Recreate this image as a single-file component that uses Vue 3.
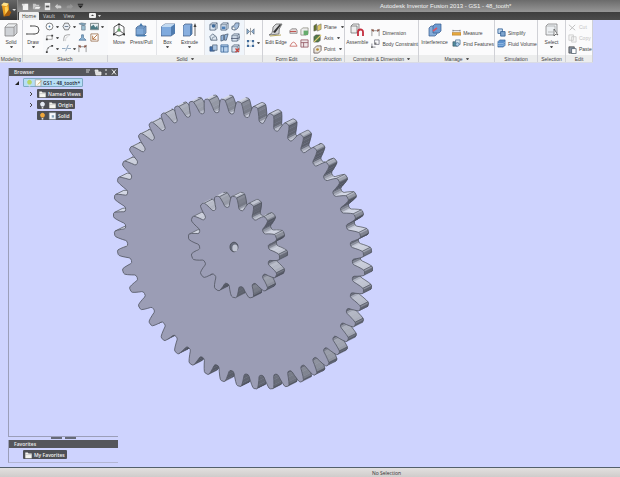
<script setup>
const panels = [
  { name: 'Modeling', cls: 'w-modeling', groups: [{ big: [{ icon: 'solid', label: 'Solid', caret: true }] }] },
  {
    name: 'Sketch', cls: 'w-sketch', groups: [
      { big: [{ icon: 'draw', label: 'Draw', caret: true }] },
      { grid: 'g-sketch', icons: ['circle', 'polygon', 'project', 'image', 'rect', 'fillet', 'mirror', 'editsk', 'arc', 'trim', 'dim', ''], carets: [0, 1, 3, 4, 8, 9] },
    ],
  },
  {
    name: 'Solid', cls: 'w-solid', more: true, groups: [
      { big: [{ icon: 'move', label: 'Move' }, { icon: 'press', label: 'Press/Pull' }] },
      { big: [{ icon: 'box', label: 'Box', caret: true }, { icon: 'extrude', label: 'Extrude', caret: true }], line: true },
      { grid: 'g-solid', line: true, icons: ['hole', 'shell', 'sweep', 'cut', 'loft', 'split', 'combine', 'frame', 'del'], carets: [] },
      { grid: 'g-one', line: true, icons: ['sym', 'pattern'], carets: [1] },
    ],
  },
  {
    name: 'Form Edit', cls: 'w-form', groups: [
      { big: [{ icon: 'edge', label: 'Edit Edge' }] },
      { grid: 'g-two', icons: ['fa', 'fb', 'fc', 'fd'], carets: [] },
    ],
  },
  { name: 'Construction', cls: 'w-constr', groups: [{ rows: [['plane', 'Plane'], ['axis', 'Axis'], ['point', 'Point']], drop: true }] },
  {
    name: 'Constrain & Dimension', cls: 'w-dim', more: true, groups: [
      { big: [{ icon: 'assemble', label: 'Assemble' }] },
      { rows: [['dim', 'Dimension'], ['body', 'Body Constraint']] },
    ],
  },
  {
    name: 'Manage', cls: 'w-manage', more: true, groups: [
      { big: [{ icon: 'interf', label: 'Interference' }] },
      { rows: [['measure', 'Measure'], ['find', 'Find Features']] },
    ],
  },
  { name: 'Simulation', cls: 'w-sim', groups: [{ rows: [['simplify', 'Simplify'], ['fluid', 'Fluid Volume']] }] },
  { name: 'Selection', cls: 'w-sel', groups: [{ big: [{ icon: 'select', label: 'Select', caret: true }] }] },
  { name: 'Edit', cls: 'w-edit', groups: [{ rows: [['x', 'Cut', true], ['copy', 'Copy', true], ['paste', 'Paste']] }] },
]
const quick = ['new', 'open', 'save', 'undo', 'redo', 'menu']

const DEPTH = [8, -4]

/* Tooth profile as [angle fraction of the pitch, height 0..1] */
const PROFILE = [
  [-0.5, 0], [-0.39, 0.03], [-0.33, 0.14], [-0.28, 0.4], [-0.21, 0.72], [-0.15, 0.93], [-0.08, 1],
  [0.08, 1], [0.15, 0.93], [0.21, 0.72], [0.28, 0.4], [0.33, 0.14], [0.39, 0.03],
]

function makeGear(cx, cy, rx, ry, teeth, root) {
  const skew = 0.2
  const pitch = (Math.PI * 2) / teeth
  const pts = []
  for (let i = 0; i < teeth; i++) {
    for (const [f, h] of PROFILE) {
      const t = Math.PI + (i + f) * pitch
      const r = root + (1 - root) * h
      pts.push([
        cx + rx * r * Math.cos(t),
        cy + ry * r * (skew * Math.cos(t) + 0.98 * Math.sin(t)),
      ])
    }
  }
  const faces = []
  pts.forEach((a, i) => {
    const b = pts[(i + 1) % pts.length]
    const nx = b[1] - a[1]
    const ny = a[0] - b[0]
    if (nx * DEPTH[0] + ny * DEPTH[1] <= 0) return
    const len = Math.hypot(nx, ny) || 1
    const up = -ny / len
    const light = Math.round(up > 0 ? 104 + 108 * up : 104 + 36 * up)
    const a2 = [a[0] + DEPTH[0], a[1] + DEPTH[1]]
    const b2 = [b[0] + DEPTH[0], b[1] + DEPTH[1]]
    const k = i % PROFILE.length
    faces.push({
      d: path([a, b, b2, a2]) + 'Z',
      fill: `rgb(${light},${light + 4},${light + 16})`,
      edge: path([a2, b2]) + (k === 5 || k === 8 ? path([a, a2]) : ''),
    })
  })
  return { faces, front: path(pts) + 'Z' }
}
function path(list) {
  return 'M' + list.map((p) => p[0].toFixed(2) + ' ' + p[1].toFixed(2)).join('L')
}
const gears = [
  makeGear(239, 181, 125.5, 145, 48, 0.905),
  makeGear(234, 184, 45.5, 51.5, 16, 0.77),
]
</script>

<template>
  <svg class="defs" aria-hidden="true">
    <defs>
      <symbol id="solid" viewBox="0 0 14 14"><path d="M1 4 4 1H13V10L10 13H1Z" fill="#cfd2d6" stroke="#777" stroke-width=".7" /><path d="M1 4H10V13M10 4 13 1" fill="none" stroke="#888" stroke-width=".7" /><path d="M1 4 4 1H13L10 4Z" fill="#eceef0" stroke="#888" stroke-width=".5" /></symbol>
      <symbol id="draw" viewBox="0 0 14 14"><path d="M1 11H9A4 4 0 0 0 9 3H6" fill="none" stroke="#555" /><path d="M0 10h2v2H0zM7 10h2v2H7zM4 2h2v2H4z" fill="#999" /></symbol>
      <symbol id="circle" viewBox="0 0 10 10"><circle cx="5" cy="5" r="3.8" fill="#fff" stroke="#555" stroke-width=".8" /><circle cx="5" cy="5" r="1" fill="#4b7ba8" /></symbol>
      <symbol id="polygon" viewBox="0 0 10 10"><path d="M3 1.300H7L9 5 7 8.700H3L1 5Z" fill="#e8ecf2" stroke="#555" stroke-width=".8" /><path d="M3 5H7" stroke="#678" /></symbol>
      <symbol id="project" viewBox="0 0 10 10"><path d="M1 2 4 1 9 2 6 4Z" fill="#7ea5bd" stroke="#456" stroke-width=".5" /><path d="M4 4H8V9H4Z" fill="#9fc1d3" stroke="#567" stroke-width=".6" /></symbol>
      <symbol id="image" viewBox="0 0 10 10"><path d="M.5 1.500h9v7h-9z" fill="#e6edf0" stroke="#566" stroke-width=".8" /><path d="M1 8V5L4 3 6 6 8 4 9 8Z" fill="#4b7a83" /></symbol>
      <symbol id="rect" viewBox="0 0 10 10"><path d="M2 3H8V7H2Z" fill="#fff" stroke="#777" stroke-width=".7" /><path d="M1 6h2v2H1zM7 2h2v2H7z" fill="#444" /></symbol>
      <symbol id="fillet" viewBox="0 0 10 10"><path d="M2 9V6Q2 2 6 2H9" fill="none" stroke="#888" stroke-width=".8" /><path d="M4 9V7Q4 4 7 4" fill="none" stroke="#bbb" stroke-width=".6" /></symbol>
      <symbol id="mirror" viewBox="0 0 10 10"><path d="M4 5V2H6V5L9 8H1Z" fill="#8fb5d5" stroke="#3c658a" stroke-width=".7" /></symbol>
      <symbol id="editsk" viewBox="0 0 10 10"><path d="M1 1H9V9H1Z" fill="#fff" stroke="#8a5c38" stroke-width=".8" /><path d="M3 7 8 2M3 3V7H7" stroke="#b1713d" stroke-width="1" fill="none" /></symbol>
      <symbol id="arc" viewBox="0 0 10 10"><path d="M2 9Q2 3 8 2" fill="none" stroke="#666" stroke-width=".8" /><path d="M1 8h2v2H1zM7 1h2v2H7zM3 4h1v1H3z" fill="#444" /></symbol>
      <symbol id="trim" viewBox="0 0 10 10"><path d="M0 5H4M6 5H10M4 8 7 1" stroke="#6d8cab" stroke-width=".8" fill="none" /></symbol>
      <symbol id="dim" viewBox="0 0 10 10"><path d="M1 9V1M9 9V1M1 3H9" stroke="#666" stroke-width=".7" fill="none" /><path d="M0 2 3 1.500V4.500ZM10 2 7 1.500V4.500Z" fill="#8a4d3c" /></symbol>
      <symbol id="move" viewBox="0 0 14 14"><path d="M7 1V7L2 11M7 7 12 11M7 1 2 4V11L7 13 12 11V4Z" fill="none" stroke="#333" stroke-width=".8" /><path d="M7 5 9 7 7 9 5 7Z" fill="#5e9c63" /><path d="M5.500 2 7 0 8.500 2ZM1 10 1 12.500 3.500 12ZM13 10V12.500L10.500 12Z" fill="#333" /></symbol>
      <symbol id="press" viewBox="0 0 14 14"><path d="M2 5 4 3H12V10L10 12H2Z" fill="#7fa9d8" stroke="#42638c" stroke-width=".7" /><path d="M7 0 9 3H5ZM1 12 13 12 11 13.500H3Z" fill="#477aad" /><path d="M2 5H10V12M10 5 12 3" fill="none" stroke="#42638c" stroke-width=".5" /></symbol>
      <symbol id="box" viewBox="0 0 14 14"><path d="M0 4 4 1H14V10L10 13H0Z" fill="#7faade" stroke="#39557b" stroke-width=".7" /><path d="M0 4 4 1H14L10 4Z" fill="#c2d9f0" /><path d="M10 4 14 1V10L10 13Z" fill="#507caf" /></symbol>
      <symbol id="extrude" viewBox="0 0 14 14"><path d="M0 3 2 1H9V11L7 13H0Z" fill="#89afdf" stroke="#39557b" stroke-width=".7" /><path d="M7 3 9 1V11L7 13Z" fill="#507caf" /><path d="M12 13V3" stroke="#444" stroke-width=".8" /><path d="M10.500 4 12 0 13.500 4Z" fill="#444" /></symbol>
      <symbol id="cubelet" viewBox="0 0 10 10"><path d="M1 3 3 1H9V7L7 9H1Z" fill="#d9e4f0" stroke="#46586e" stroke-width=".8" /><path d="M1 3H7V9M7 3 9 1" fill="none" stroke="#46586e" stroke-width=".6" /></symbol>
      <symbol id="hole" viewBox="0 0 10 10"><use href="#cubelet" /><circle cx="5" cy="4.500" r="2" fill="#3f6b9b" /></symbol>
      <symbol id="shell" viewBox="0 0 10 10"><use href="#cubelet" /><path d="M2 5H6V8H2Z" fill="#4c7fb8" /></symbol>
      <symbol id="sweep" viewBox="0 0 10 10"><path d="M1 8V5Q4 5 5 1H9Q9 8 4 9Z" fill="#a4bddb" stroke="#46586e" stroke-width=".8" /><circle cx="3" cy="7" r="1.500" fill="#fff" stroke="#456" stroke-width=".5" /></symbol>
      <symbol id="cut" viewBox="0 0 10 10"><path d="M1 4 4 1 8 4 9 8H2Z" fill="#dce6f0" stroke="#46586e" stroke-width=".8" /><path d="M3 8Q3 4 7 4" fill="none" stroke="#46586e" stroke-width=".6" /></symbol>
      <symbol id="loft" viewBox="0 0 10 10"><path d="M1 3 4 2 4 8 1 9ZM5 2 9 1 7 8 5 8Z" fill="#93b4da" stroke="#46586e" stroke-width=".8" /></symbol>
      <symbol id="split" viewBox="0 0 10 10"><use href="#cubelet" /><path d="M0 6 8 6 10 4" fill="none" stroke="#4a5870" /></symbol>
      <symbol id="combine" viewBox="0 0 10 10"><path d="M1 3H6V8H1Z" fill="#3f6fae" stroke="#334f78" stroke-width=".7" /><path d="M4 1H9V7H4Z" fill="#a9c4e2" stroke="#46586e" stroke-width=".7" /></symbol>
      <symbol id="frame" viewBox="0 0 10 10"><path d="M1 1H9V9H1Z" fill="#b9d2ec" stroke="#3e6b9d" stroke-width=".9" /><path d="M1 3H9M4 3V9" stroke="#3e6b9d" stroke-width=".9" /></symbol>
      <symbol id="del" viewBox="0 0 10 10"><use href="#cubelet" /><path d="M5 5 9 9M9 5 5 9" stroke="#cc4037" stroke-width="1.400" /></symbol>
      <symbol id="sym" viewBox="0 0 10 10"><path d="M5 1V9" stroke="#555" stroke-width=".6" /><path d="M1 2 4 5 1 8ZM9 2 6 5 9 8Z" fill="#8fb1d4" stroke="#456" stroke-width=".6" /></symbol>
      <symbol id="pattern" viewBox="0 0 10 10"><path d="M1 1h2.500v2.500H1zM6.500 1H9v2.500H6.500zM1 6.500h2.500V9H1zM6.500 6.500H9V9H6.500z" fill="#416b9b" /><path d="M4 2H6M4 8H6M2 4V6M8 4V6" stroke="#8ab" stroke-width=".7" /></symbol>
      <symbol id="edge" viewBox="0 0 14 14"><path d="M0 12Q4 11 4 4L7 1H13Q9 6 10 11Z" fill="#d5d6d8" stroke="#555" stroke-width=".7" /><path d="M4 9 11 1 12 2 6 10Z" fill="#333" /><path d="M1 13 12 12" stroke="#b4a65a" /></symbol>
      <symbol id="fa" viewBox="0 0 10 10"><path d="M1 7V4L3 2H8L9 4V7Z" fill="#e4dada" stroke="#666" stroke-width=".7" /><path d="M1 5H8" stroke="#bd4b46" /></symbol>
      <symbol id="fb" viewBox="0 0 10 10"><path d="M1 3 3 1H9V7L7 9H1Z" fill="#eee" stroke="#776" stroke-width=".7" /><path d="M4 4H9V9H4Z" fill="#66ac6d" /></symbol>
      <symbol id="fc" viewBox="0 0 10 10"><path d="M1 8Q5-1 9 8M1 8H9" fill="none" stroke="#c6645e" stroke-width=".9" /></symbol>
      <symbol id="fd" viewBox="0 0 10 10"><path d="M1 1H9V9H1ZM1 4H9M4 4V9" fill="#eee5e8" stroke="#915560" stroke-width=".9" /></symbol>
      <symbol id="plane" viewBox="0 0 10 10"><path d="M1 3 4 1V8L1 9Z" fill="#66752c" stroke="#444" stroke-width=".5" /><path d="M5 3 9 1V7L5 9Z" fill="#dfc868" stroke="#665" stroke-width=".6" /></symbol>
      <symbol id="axis" viewBox="0 0 10 10"><path d="M1 3 3 1H8V7L6 9H1Z" fill="#52794a" stroke="#444" stroke-width=".6" /><path d="M1 9 9 1" stroke="#e3cf72" stroke-width="1.400" /></symbol>
      <symbol id="point" viewBox="0 0 10 10"><path d="M1 4 4 1H9V6L6 9H1Z" fill="#e9e5dd" stroke="#544" stroke-width=".8" /><circle cx="5" cy="5" r="1.500" fill="#b68b36" /></symbol>
      <symbol id="assemble" viewBox="0 0 14 14"><path d="M1 3 3 1H9V8L7 10H1ZM1 3H7V10" fill="#eee" stroke="#666" stroke-width=".7" /><path d="M8 13V9A2.500 2.500 0 0 1 13 9V13" fill="none" stroke="#c32d3d" stroke-width="1.800" /></symbol>
      <symbol id="body" viewBox="0 0 10 10"><path d="M4 1H9V6H4ZM1 5V9H5" fill="none" stroke="#667" stroke-width=".8" /><path d="M0 8h2v2H0zM4 4h2v2H4z" fill="#777" /></symbol>
      <symbol id="interf" viewBox="0 0 14 14"><path d="M1 5 3 3H9V11L7 13H1Z" fill="#86add9" stroke="#35598d" stroke-width=".7" /><path d="M5 3 7 1H13V8L11 10H5Z" fill="#6d9bd2" stroke="#35598d" stroke-width=".7" /><path d="M5 8 9 5" stroke="#d5566a" stroke-width="1.600" /></symbol>
      <symbol id="measure" viewBox="0 0 10 10"><path d="M0 5H10V8H0Z" fill="#e5a83d" stroke="#a66c1e" stroke-width=".5" /><path d="M1 3H9M1 2V4M9 2V4" stroke="#555" stroke-width=".7" /></symbol>
      <symbol id="find" viewBox="0 0 10 10"><path d="M1 3H6V8H1Z" fill="#508c9c" stroke="#345" stroke-width=".6" /><path d="M4 1H9V6H4Z" fill="#d8e7ef" stroke="#346087" stroke-width=".7" /><circle cx="6" cy="6" r="2" fill="#aed0ea" stroke="#346087" stroke-width=".7" /></symbol>
      <symbol id="simplify" viewBox="0 0 10 10"><path d="M1 1H6V6H1Z" fill="#c4d9ef" stroke="#315f95" stroke-width=".9" /><path d="M4 4H9V9H4Z" fill="#7ea5cf" stroke="#315f95" stroke-width=".9" /></symbol>
      <symbol id="fluid" viewBox="0 0 10 10"><path d="M1 3 3 1H9V7L7 9H1Z" fill="#5c91cd" stroke="#2d5689" stroke-width=".6" /><path d="M1 5H7L9 3M1 7H7L9 5" fill="none" stroke="#b8d4f0" stroke-width=".6" /></symbol>
      <symbol id="select" viewBox="0 0 14 14"><path d="M1 3 3 1H12V10L10 12H1Z" fill="#eceff2" stroke="#777" stroke-width=".7" /><path d="M1 3H10V12M3 9H8" fill="none" stroke="#999" stroke-width=".6" /><path d="M9 6V13L11 11 13 12Z" fill="#fff" stroke="#333" stroke-width=".6" /></symbol>
      <symbol id="x" viewBox="0 0 10 10"><path d="M1 2 8 8M8 2 2 8" stroke="#bbb" /></symbol>
      <symbol id="copy" viewBox="0 0 10 10"><path d="M1 1H6V7H1ZM4 3H9V9H4Z" fill="#f6f6f6" stroke="#c4c4c4" stroke-width=".8" /></symbol>
      <symbol id="paste" viewBox="0 0 10 10"><path d="M1 2H7V9H1Z" fill="#8a94a2" stroke="#444" stroke-width=".8" /><path d="M4 4H9V9.500H4Z" fill="#fff" stroke="#456" stroke-width=".8" /></symbol>
      <symbol id="new" viewBox="0 0 10 10"><path d="M2 9V4L4 2H8V9Z" fill="#f2f2f2" /><path d="M1 2h3v2H1z" fill="#ddd" /></symbol>
      <symbol id="open" viewBox="0 0 10 10"><path d="M1 2H4L5 3H8V5L9 8H1Z" fill="#c6c6c6" /><path d="M2 8 4 5H10L8 8Z" fill="#f1f1f1" stroke="#666" stroke-width=".4" /></symbol>
      <symbol id="save" viewBox="0 0 10 10"><path d="M2 1H8V9H2Z" fill="#e9e9e9" /><path d="M3 4H7V6H3Z" fill="#555" /></symbol>
      <symbol id="undo" viewBox="0 0 10 10"><path d="M1 5 4 2V4H7Q9 5 8 7H4V8Z" fill="#ccc" /></symbol>
      <symbol id="redo" viewBox="0 0 10 10"><path d="M9 5 6 2V4H3Q1 5 2 7H6V8Z" fill="#969696" /></symbol>
      <symbol id="menu" viewBox="0 0 10 10"><path d="M2 4H8L5 7ZM2 2H8V3H2Z" fill="#222" /></symbol>
      <symbol id="folder" viewBox="0 0 10 10"><path d="M1 2H4L5 3H9V9H1Z" fill="#f5f5ef" /><path d="M1 4.500H9" stroke="#999" stroke-width=".5" /></symbol>
      <symbol id="bulb" viewBox="0 0 10 10"><path d="M3.500 7Q1.500 5 2.200 3A3 3 0 0 1 7.800 3Q8.500 5 6.500 7Z" fill="currentColor" /><path d="M4 7.500H6V9.500H4Z" fill="#ddd" /></symbol>
      <symbol id="part" viewBox="0 0 10 10"><path d="M1 1H9V9H1Z" fill="#f8fafc" stroke="#9fb0bd" stroke-width=".6" /><path d="M4 4H7V7H4Z" fill="#89a8bf" /></symbol>
      <symbol id="doc" viewBox="0 0 10 10"><path d="M1 1H8V9H1Z" fill="#fbfbf4" stroke="#888" stroke-width=".7" /><path d="M4 7 9 2" stroke="#c79a4b" /></symbol>
    </defs>
  </svg>

  <div class="app">
    <header class="top">
      <button class="logo" aria-label="Application menu">
        <svg viewBox="0 0 18 20"><path d="M2 5 9 3 10 14 4 17Z" fill="#e99b1d" /><path d="M1 5 4 2 9 3 7 6Z" fill="#ffe28a" /><path d="M5 7 8 6 9 14 6 16Z" fill="#ffd155" /><path d="M9 10 12 12 10 16 4 17Z" fill="#a85d0c" /><path d="M13 9H17L15 11Z" fill="#ddd" /></svg>
      </button>
      <div class="bars">
        <div class="title">
          <div class="quick">
            <button v-for="q in quick" :key="q" :aria-label="q"><svg><use :href="'#' + q" /></svg></button>
          </div>
          <h1>Autodesk Inventor Fusion 2013 - GS1 - 48_tooth*</h1>
        </div>
        <nav class="tabs">
          <button class="active">Home</button>
          <button>Vault</button>
          <button>View</button>
          <button aria-label="Ribbon display"><svg viewBox="0 0 12 6"><rect width="7" height="5" rx="1" fill="#eee" /><path d="M2 3 3.500 1.500 5 3Z" fill="#444" /><path d="M9 2H12L10.500 4Z" fill="#ddd" /></svg></button>
        </nav>
      </div>
    </header>

    <section class="ribbon">
      <div v-for="p in panels" :key="p.name" class="panel" :class="p.cls">
        <div class="tools">
          <div v-for="(g, gi) in p.groups" :key="gi" class="group" :class="{ line: g.line, grow: g.rows || g.big }">
            <template v-if="g.big">
              <button v-for="b in g.big" :key="b.label" class="big">
                <svg><use :href="'#' + b.icon" /></svg>
                <span>{{ b.label }}</span>
                <i v-if="b.caret" class="caret"></i>
              </button>
            </template>
            <div v-else-if="g.grid" class="grid" :class="g.grid">
              <div v-for="(ic, k) in g.icons" :key="k" class="cell">
                <button v-if="ic" :aria-label="ic"><svg><use :href="'#' + ic" /></svg></button>
                <i v-if="g.carets.includes(k)" class="caret"></i>
              </div>
            </div>
            <div v-else class="rows">
              <button v-for="r in g.rows" :key="r[1]" :disabled="r[2]">
                <svg><use :href="'#' + r[0]" /></svg><span>{{ r[1] }}</span><i v-if="g.drop" class="caret"></i>
              </button>
            </div>
          </div>
        </div>
        <div class="caption">{{ p.name }}<i v-if="p.more" class="caret"></i></div>
      </div>
    </section>

    <main class="canvas">
      <svg class="model" role="img" aria-label="48 tooth gear">
        <g v-for="(g, i) in gears" :key="i">
          <path v-for="(f, k) in g.faces" :key="k" :d="f.d" :fill="f.fill" :stroke="f.fill" stroke-width=".4" />
          <path v-for="(f, k) in g.faces" :key="'e' + k" :d="f.edge" class="edge" />
          <path :d="g.front" class="face" />
        </g>
        <ellipse cx="234" cy="184" rx="4" ry="4.800" fill="#686d7c" stroke="#50545f" />
        <ellipse cx="235" cy="185" rx="2.700" ry="3.500" fill="#c2c6d3" />
      </svg>

      <aside class="dock">
        <section class="browser">
          <h2><span>Browser</span>
            <svg viewBox="0 0 34 8"><path d="M2 2H6M2 4H5M11 2H14V4H17V7H12Z" fill="#ddd" stroke="#eee" stroke-width=".8" /><path d="M22 1V3M22 5V7M28 1.500 32 6.500M32 1.500 28 6.500" stroke="#eee" /></svg>
          </h2>
          <ul class="tree">
            <li><svg class="tw" viewBox="0 0 6 6"><path d="M5 1V5H1Z" fill="#222" /></svg><button class="node sel"><svg class="green"><use href="#bulb" /></svg><svg><use href="#doc" /></svg><b>GS1 - 48_tooth*</b></button></li>
            <li class="sub"><svg class="tw" viewBox="0 0 6 6"><path d="M2 1 4 3 2 5" fill="none" stroke="#444" /></svg><button class="node"><svg><use href="#folder" /></svg><b>Named Views</b></button></li>
            <li class="sub"><svg class="tw" viewBox="0 0 6 6"><path d="M2 1 4 3 2 5" fill="none" stroke="#444" /></svg><button class="node"><svg class="pale"><use href="#bulb" /></svg><svg><use href="#folder" /></svg><b>Origin</b></button></li>
            <li class="sub"><span class="tw"></span><button class="node"><svg class="amber"><use href="#bulb" /></svg><svg><use href="#part" /></svg><b>Solid</b></button></li>
          </ul>
        </section>
        <div class="grip"><i></i><i></i></div>
        <section class="favs">
          <h2>Favorites</h2>
          <button class="node"><svg><use href="#folder" /></svg><b>My Favorites</b></button>
        </section>
      </aside>
    </main>

    <footer class="status">No Selection</footer>
  </div>
</template>

<style>
body { margin: 0; background: #ced3fe; }
</style>

<style scoped>
* { box-sizing: border-box; }
.app { display: flex; flex-direction: column; min-height: 100vh; overflow: hidden; font: 5px/6px "Open Sans", "Noto Sans", sans-serif; color: #444; }
.defs { position: absolute; width: 0; height: 0; }
button { font: inherit; color: inherit; background: none; border: 0; padding: 0; margin: 0; white-space: nowrap; }
svg { display: block; flex: none; }
h1, h2 { margin: 0; font: inherit; }

.top { display: flex; height: 20px; background: #444; }
.logo { width: 18px; background: linear-gradient(#666, #333); border-right: 1px solid #888; }
.logo svg { width: 17px; height: 20px; }
.bars { flex: 1; display: flex; flex-direction: column; }
.title { display: flex; align-items: center; height: 12px; background: linear-gradient(#6b6b6b, #969696); color: #f2f2f2; }
.quick { display: flex; gap: 2px; padding-left: 3px; width: 362px; }
.quick svg { width: 9px; height: 9px; }
.title h1 { font: 6px/8px "Liberation Sans", Arial, sans-serif; white-space: nowrap; }
.tabs { display: flex; height: 8px; padding-left: 1px; background: linear-gradient(#3e3e3e, #4c4c4c); color: #ddd; }
.tabs button { width: 20px; line-height: 7px; }
.tabs svg { width: 12px; height: 6px; margin: auto; }
.tabs .active { background: #f0f0f0; color: #333; border-radius: 1px 1px 0 0; }
.tabs button:last-child { margin-left: 6px; }

.ribbon { display: flex; align-self: flex-start; height: 43px; background: #fbfbfc; border-bottom: 1px solid #d9dbe6; font-family: "Liberation Sans", Arial, sans-serif; }
.panel { display: flex; flex-direction: column; border-right: 1px solid #d0d1d6; }
.w-modeling { width: 23px; } .w-sketch { width: 85px; } .w-solid { width: 155px; } .w-form { width: 48px; }
.w-constr { width: 34px; } .w-dim { width: 74px; } .w-manage { width: 76px; } .w-sim { width: 43px; }
.w-sel { width: 28px; } .w-edit { width: 27px; }
.tools { flex: 1; display: flex; }
.caption { display: flex; justify-content: center; align-items: center; gap: 3px; height: 7px; background: #eceded; white-space: nowrap; }
.caret { border: 1px solid transparent; border-top: 2px solid #555; border-bottom: 0; width: 3px; height: 2px; }
.group { display: flex; justify-content: space-around; }
.group.grow { flex: 1; }
.group.line { border-left: 1px solid #e3e4e8; }
.big { display: flex; flex-direction: column; align-items: center; padding-top: 3px; min-width: 20px; }
.big svg { width: 14px; height: 14px; margin-bottom: 2px; }
.big .caret { margin-top: 1px; }
.w-solid .group.grow { flex: 1; justify-content: flex-start; }
.w-solid .big { min-width: 22px; }
.grid { display: grid; align-content: space-around; padding: 1px 2px; }
.g-sketch { grid-template-columns: 17px 16px 12px 16px; background: #f8f9fb; }
.g-solid { grid-template-columns: 11px 11px 11px; padding: 1px 2px 1px 4px; background: #f0f5fb; }
.g-one { grid-template-columns: 14px; width: 17px; padding: 6px 0 6px 1px; }
.g-two { grid-template-columns: 11px 10px; padding: 6px 0; }
.cell { display: flex; align-items: center; gap: 2px; }
.cell svg { width: 9px; height: 9px; }
.rows { display: flex; flex-direction: column; justify-content: center; gap: 2px; flex: 1; padding: 1px 0 0 2px; }
.rows button { display: flex; align-items: center; gap: 2px; height: 9px; }
.rows button:disabled { color: #c4c4c4; }
.rows svg { width: 9px; height: 9px; }
.rows .caret { margin-left: 2px; }

.canvas { position: relative; flex: 1; display: flex; background: #ced3fe; }
.model { position: absolute; inset: 0; width: 100%; height: 100%; }
.face { fill: #9b9db5; stroke: #50545f; stroke-width: 0.8; stroke-linejoin: round; }
.edge { fill: none; stroke: #4b4f5a; stroke-width: 0.7; }

.dock { position: relative; display: flex; flex-direction: column; width: 110px; margin: 5px 0 4px 8px; }
.dock h2 { display: flex; justify-content: space-between; align-items: center; height: 8px; padding-left: 5px; background: #55565b; color: #eee; font-weight: 600; }
.dock h2 svg { width: 34px; height: 8px; }
.browser { flex: 1; border-left: 1px solid #9b9eb9; border-bottom: 1px solid #9b9eb9; }
.tree { list-style: none; margin: 2px 0 0; padding: 0 0 0 5px; display: flex; flex-direction: column; gap: 2px; }
.tree li { display: flex; align-items: center; gap: 3px; height: 9px; }
.tree .sub { padding-left: 14px; }
.tw { width: 6px; height: 6px; }
.node { display: flex; align-items: center; gap: 1px; height: 9px; padding: 0 2px 0 1px; background: #4e5056; color: #f3f3f3; border-radius: 1px; }
.node svg { width: 9px; height: 8px; }
.node b { font-weight: 600; }
.node.sel { gap: 0; background: #b6def5; color: #223; border: 1px solid #7fa9c4; }
.green { color: #b6d66a; } .pale { color: #e5ebf5; } .amber { color: #f0a83c; }
.grip { display: flex; justify-content: center; gap: 3px; height: 3px; }
.grip i { width: 11px; height: 2px; background: #666a78; }
.favs { border-left: 1px solid #9b9eb9; border-bottom: 1px solid #b3b6d3; padding-bottom: 3px; }
.favs .node { margin: 2px 0 0 14px; }

.status { height: 10px; border-top: 1px solid #53606b; background: linear-gradient(#e2e0df, #cfcccb); line-height: 10px; text-align: center; padding-left: 153px; color: #333; }
</style>
